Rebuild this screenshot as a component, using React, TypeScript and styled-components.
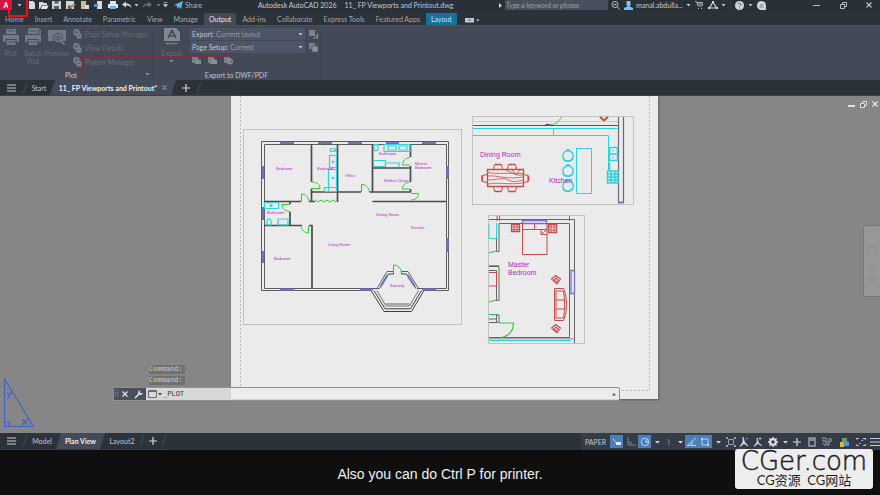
import React from "react";
import styled, { createGlobalStyle, css } from "styled-components";

const GlobalStyle = createGlobalStyle`
  *, *::before, *::after { box-sizing: border-box; }
  html, body { margin: 0; padding: 0; }
  body { background: #0f0f0f; color: #c3c8ce; font: 7px/10px Lato, "Open Sans", sans-serif; }
  button, input, select { font: inherit; color: inherit; margin: 0; padding: 0; border: 0; background: none; }
  svg { display: block; flex: none; }
  a { color: inherit; text-decoration: none; }
`;

const Page = styled.div`
  position: relative;
  display: flex;
  flex-direction: column;
  min-height: 100vh;
  overflow: hidden;
`;

/* ---------- title bar ---------- */

const TitleBar = styled.header`
  display: grid;
  grid-template-columns: 258px minmax(0, 1fr) auto;
  align-items: center;
  height: 10px;
  background: #2a3038;
  overflow: hidden;
`;

const QuickAccess = styled.div`
  display: flex;
  align-items: center;
`;

const AppButton = styled.button`
  width: 12px;
  height: 10px;
  background: #d8124f;
  color: #fff;
  font-weight: 700;
`;

const ToolButton = styled.button<{ $w?: number }>`
  display: flex;
  align-items: center;
  justify-content: center;
  flex: none;
  width: ${(p) => p.$w ?? 14}px;
  height: 10px;
`;

const ShareLink = styled.a`
  display: flex;
  align-items: center;
  gap: 2px;
  margin-left: 4px;
  color: #9db6c6;
`;

const WindowTitle = styled.div`
  display: flex;
  gap: 8px;
  color: #c6cbd1;
  white-space: nowrap;
`;

const TitleRight = styled.div`
  display: flex;
  align-items: center;
`;

const SearchInput = styled.input`
  width: 103px;
  height: 10px;
  padding: 0 1px;
  background: #474e5c;
  font-style: italic;
  &::placeholder { color: #9ba1aa; opacity: 1; }
`;

const UserButton = styled.button`
  display: flex;
  align-items: center;
  gap: 3px;
  width: 68px;
  margin-left: 2px;
  white-space: nowrap;
`;

const Divider = styled.span`
  width: 1px;
  height: 8px;
  margin: 0 1px 0 4px;
  background: #3d444e;
`;

const WindowButtons = styled.div`
  display: flex;
  margin-left: 40px;
  margin-right: 4px;
`;

/* ---------- ribbon ---------- */

const RibbonTabs = styled.nav`
  display: flex;
  align-items: flex-end;
  height: 15px;
  gap: 1px;
  background: #2b3239;
`;

const RibbonTab = styled.button<{ $tone?: "open" | "context" }>`
  height: 12px;
  padding: 0 5px;
  color: #a3a9b0;
  white-space: nowrap;
  ${(p) => p.$tone === "open" && css`background: #434956; color: #e4e7ea;`}
  ${(p) => p.$tone === "context" && css`background: #16709b; color: #cfe4ef;`}
`;

const Ribbon = styled.section`
  display: flex;
  height: 55px;
  background: #434956;
  border-top: 1px solid #4b515e;
`;

const Panel = styled.div<{ $w: number }>`
  display: flex;
  flex-direction: column;
  flex: none;
  width: ${(p) => p.$w}px;
  border-right: 1px solid #3e4450;
`;

const PanelBody = styled.div`
  display: flex;
  flex: 1;
  padding-top: 1px;
`;

const PanelTitle = styled.div`
  display: flex;
  height: 11px;
  justify-content: center;
  align-items: center;
  color: #c2c6cc;
`;

const PanelName = styled.span`
  flex: 1;
  text-align: center;
`;

const BigButton = styled.button<{ $w: number }>`
  display: flex;
  flex-direction: column;
  align-items: center;
  justify-content: flex-start;
  gap: 3px;
  width: ${(p) => p.$w}px;
  height: 42px;
  padding-top: 1px;
  line-height: 8px;
  color: #656b78;
`;

const SmallStack = styled.div`
  display: flex;
  flex-direction: column;
  padding-left: 4px;
`;

const SmallButton = styled.button`
  display: flex;
  align-items: center;
  gap: 3px;
  height: 14px;
  color: #676d79;
  white-space: nowrap;
`;

const FieldStack = styled.div`
  display: flex;
  flex-direction: column;
  padding-top: 1px;
  gap: 1px;
`;

const FieldRow = styled.div`
  display: flex;
  align-items: center;
  gap: 4px;
`;

const Field = styled.label`
  display: flex;
  align-items: center;
  width: 115px;
  height: 12px;
  padding: 0 2px;
  gap: 2px;
  background: #4c5465;
  color: #c3c7cd;
  white-space: nowrap;
`;

const FieldSelect = styled.select`
  appearance: none;
  flex: 1;
  min-width: 0;
  color: #979daa;
  outline: none;
`;

const IconRow = styled.div`
  display: flex;
  gap: 2px;
  padding-top: 1px;
`;

/* ---------- tab strips ---------- */

const TabStrip = styled.nav<{ $h: number }>`
  display: flex;
  align-items: center;
  height: ${(p) => p.$h}px;
  background: #2b3239;
  border-bottom: 1px solid #3a414a;
`;

const StripTab = styled.button<{ $w: number; $active?: boolean }>`
  position: relative;
  z-index: 0;
  display: flex;
  align-items: center;
  justify-content: center;
  gap: 5px;
  width: ${(p) => p.$w}px;
  height: 100%;
  color: #c2c7cd;
  white-space: nowrap;
  ${(p) => p.$active && css`
    color: #f0f2f4;
    font-weight: 700;
    &::before {
      content: "";
      position: absolute;
      z-index: -1;
      inset: 0;
      background: #434b59;
      clip-path: polygon(5px 0, 100% 0, calc(100% - 5px) 100%, 0 100%);
    }
  `}
`;

/* ---------- drawing area ---------- */

const Workspace = styled.main`
  position: relative;
  flex: 1;
  min-height: 337px;
  background: #868686;
  overflow: hidden;
`;

const Sheet = styled.div`
  position: absolute;
  left: 231px;
  top: 0;
  background: #ebebeb;
  box-shadow: 1px 1px 2px #5f5f5f;
`;

const UcsMark = styled.div`
  position: absolute;
  left: 3px;
  bottom: 5px;
`;

const ChildWindowButtons = styled.div`
  position: absolute;
  top: 3px;
  right: 0;
  display: flex;
`;

const NavPalette = styled.div`
  position: absolute;
  right: 0;
  top: 129px;
  width: 17px;
  height: 72px;
  display: flex;
  justify-content: center;
  align-items: center;
  background: #969896;
  border: 1px solid #787a78;
  border-right: 0;
  border-radius: 2px 0 0 2px;
`;

const CommandArea = styled.div`
  position: absolute;
  left: 113px;
  bottom: 32px;
  width: 507px;
  font-family: "DejaVu Sans Mono", "Liberation Mono", monospace;
`;

const HistoryLine = styled.div`
  width: 36px;
  height: 9px;
  margin: 0 0 2px 36px;
  line-height: 9px;
  background: #707070;
  color: #cdcdcd;
`;

const CommandBar = styled.div`
  display: flex;
  align-items: center;
  height: 14px;
  background: rgba(236, 236, 236, 0.8);
  border: 1px solid #8d8f92;
  border-radius: 1px 2px 2px 1px;
`;

const CommandHandle = styled.div`
  display: flex;
  align-items: center;
  width: 32px;
  height: 12px;
  background: #4a4f5d;
`;

const CommandInput = styled.input`
  flex: 1;
  min-width: 0;
  color: #3a3a3a;
  outline: none;
`;

/* ---------- status bar and caption ---------- */

const StatusBar = styled.footer`
  display: flex;
  justify-content: space-between;
  height: 17px;
  background: #2b3239;
`;

const StatusTools = styled.div`
  display: flex;
  align-items: center;
  background: #353c48;
  color: #c4c8ce;
`;

const StatusButton = styled.button<{ $w: number; $on?: boolean }>`
  display: flex;
  align-items: center;
  justify-content: center;
  width: ${(p) => p.$w}px;
  height: 13px;
  background: ${(p) => (p.$on ? "#4c7fb8" : "transparent")};
`;

const Caption = styled.div`
  display: flex;
  align-items: center;
  justify-content: center;
  height: 45px;
  padding-top: 3px;
  background: #0f0f0f;
  color: #f0f0f0;
  font: 14px/16px "Liberation Sans", Arial, sans-serif;
`;

const Watermark = styled.div`
  position: absolute;
  right: 7px;
  bottom: 6px;
  display: flex;
  flex-direction: column;
  align-items: center;
  width: 138px;
  height: 40px;
  border-radius: 3px;
  background: #ededed;
  color: #1d1d1d;
`;

const WatermarkName = styled.span`
  font: 200 26px/25px "DejaVu Sans Light", "DejaVu Sans", sans-serif;
  -webkit-text-stroke: 0.5px #1d1d1d;
`;

const WatermarkNote = styled.span`
  font: 13px/13px Lato, "Noto Sans CJK SC", sans-serif;
  white-space: pre;
`;

const Highlight = styled.div<{ $faint?: boolean }>`
  position: absolute;
  pointer-events: none;
  ${(p) =>
    p.$faint
      ? css`left: 82px; top: 56px; width: 152px; height: 39px; border: 1px solid #a8202c; opacity: 0.55;
          mask-image: linear-gradient(#000 30%, rgba(0, 0, 0, 0.3) 60%);`
      : css`left: 8px; top: -4px; width: 20px; height: 21px; border: 2px solid #f01018;`}
`;

/* ---------- icons ---------- */

const Caret = ({ c = "#c4c8ce" }: { c?: string }) => (
  <svg width="5" height="3" viewBox="0 0 5 3"><path d="M0.5 0h4L2.5 2.6z" fill={c} /></svg>
);

const Burger = () => (
  <svg width="9" height="8" viewBox="0 0 9 8"><path d="M0 1h9M0 4h9M0 7h9" stroke="#c8ccd1" strokeWidth="1" /></svg>
);

const Plus = () => (
  <svg width="8" height="8" viewBox="0 0 8 8"><path d="M4 0v8M0 4h8" stroke="#d4d7db" strokeWidth="1.2" /></svg>
);

const Cross = ({ c = "#a9aeb5", s = 5 }: { c?: string; s?: number }) => (
  <svg width={s} height={s} viewBox="0 0 6 6"><path d="M.5 .5l5 5M5.500 .5l-5 5" stroke={c} strokeWidth="1.2" /></svg>
);

const Slash = () => (
  <svg width="6" height="14" viewBox="0 0 6 14"><path d="M5 1L1 13" stroke="#454c56" strokeWidth="1" /></svg>
);

const Printer = ({ c = "#747985", s = 18, variant = "plain" }: { c?: string; s?: number; variant?: "plain" | "batch" }) => (
  <svg width={s} height={s} viewBox="0 0 18 18">
    {variant === "batch" && <path d="M5 0h10v2H5zM15 2h2v4h-2z" fill={c} />}
    <path d="M4 1h10v5H4z" fill={c} />
    <path d="M1 7h16v7h-2.500v-3h-11v3H1z" fill={c} />
    <path d="M4.500 12h9v5h-9z" fill={c} />
    <path d="M5.500 3h7M5.500 14h7" stroke="#434956" strokeWidth=".8" />
  </svg>
);

const PreviewIcon = () => (
  <svg width="18" height="18" viewBox="0 0 18 18">
    <path d="M0 2h18v11h-4a5 5 0 10-8 0H0z" fill="#737884" />
    <circle cx="10" cy="10" r="3.600" fill="#5b616e" stroke="#737884" strokeWidth="1.500" />
    <path d="M12.500 12.500l4 4" stroke="#737884" strokeWidth="2" />
  </svg>
);

const ExportIcon = () => (
  <svg width="16" height="18" viewBox="0 0 16 18">
    <path d="M0 0h12l4 4v9H0z" fill="#83878f" />
    <path d="M4 10L8 2.500 12 10M5.500 8h5" fill="none" stroke="#434956" strokeWidth="1.600" />
    <path d="M2 15.500h12" stroke="#7b808a" strokeWidth="1.500" strokeDasharray="3 .8" />
  </svg>
);

const GearPage = () => (
  <svg width="9" height="10" viewBox="0 0 9 10">
    <circle cx="3.500" cy="3.500" r="2.600" fill="#5f6572" stroke="#747a86" strokeWidth="1.600" />
    <path d="M3.500 4.500h5v5h-5z" fill="#7c818c" />
    <path d="M4.500 6.500h3" stroke="#434956" strokeWidth=".7" />
  </svg>
);

const TinySheet = ({ k }: { k: number }) => (
  <svg width="10" height="9" viewBox="0 0 10 9">
    <path d="M0 1h5l2 2v4H0z" fill="#7a7f8a" />
    {k === 0 && <path d="M3 4h6v4H3z" fill="#858a94" />}
    {k === 1 && <path d="M4 4h5v4H2z" fill="#8a8f98" />}
    {k === 2 && <circle cx="6" cy="5.500" r="2.400" fill="none" stroke="#8a8f98" strokeWidth="1.200" />}
  </svg>
);

const PickArea = ({ k }: { k: number }) => (
  <svg width="10" height="9" viewBox="0 0 10 9">
    <path d="M0 0h6v6H0z" fill="#7b808b" />
    {k ? <path d="M3 3h6v6H3z" fill="#8d929b" stroke="#434956" strokeWidth=".6" /> : <path d="M4 3l4.500 4.500M8.500 3.500V8H4" stroke="#8d929b" fill="none" />}
  </svg>
);

const quickIcons: { name: string; w: number; art: React.ReactNode }[] = [
  { name: "New", w: 12, art: <path d="M2 0h4l2 2v6H2z" fill="#d7dade" /> },
  { name: "Open", w: 12, art: <><path d="M0 1h4l1 1h3v2H3L1 8H0z" fill="#d7dade" /><path d="M3.500 4.500H9.500L8 8H1.800z" fill="#e7e9eb" /></> },
  { name: "Save", w: 14, art: <><path d="M0 0h9v8H0z" fill="#cfd3d8" /><path d="M2.500 0h4v2.500h-4zM2 5h5v3H2z" fill="#5a6270" /></> },
  { name: "Save As", w: 14, art: <><path d="M0 0h8v8H0z" fill="#cfd3d8" /><path d="M2 4.500h4V8H2z" fill="#5a6270" /><path d="M4 6l4-4 1.500 1.500-4 4z" fill="#d58b4a" /></> },
  { name: "Open from Web", w: 14, art: <><path d="M1 0h5v8H1z" fill="#d4b98a" /><path d="M5 4h4v4H5z" fill="#d7dade" /></> },
  { name: "Save to Web", w: 14, art: <><path d="M3 0h5v8H3z" fill="#d7dade" /><path d="M0 3h4v3H0z" fill="#3d97d6" /></> },
  { name: "Plot", w: 14, art: <><path d="M2 0h6v3H2zM0 3h10v4H0z" fill="#dce4ec" /><path d="M2 5h6v3H2z" fill="#6db3e6" /></> },
  { name: "Undo", w: 14, art: <path d="M0 3.500L4 .5v2c3 0 5 1 5.500 4.500C8 5.200 6.500 4.600 4 4.600v2z" fill="#d3d6da" /> },
];

const ribbonTabs = ["Home", "Insert", "Annotate", "Parametric", "View", "Manage", "Output", "Add-ins", "Collaborate", "Express Tools", "Featured Apps", "Layout"];

const statusItems: { name: string; w: number; on?: boolean; art: React.ReactNode }[] = [
  { name: "Command line", w: 13, on: true, art: <><path d="M1 2l2 2M3 5.500h1" stroke="#dfeaf5" /><path d="M4 5h5v3H4z" fill="#dfeaf5" /></> },
  { name: "Ortho mode", w: 15, art: <path d="M2 0v8h8M2 5h3v3" fill="none" stroke="#79808c" /> },
  { name: "Polar tracking", w: 13, on: true, art: <><circle cx="5" cy="5" r="3.700" fill="none" stroke="#b9d3ee" /><path d="M5 5h4M5 5l3-3" stroke="#b9d3ee" /></> },
  { name: "Polar options", w: 11, art: <path d="M3 4h5L5.500 6.600z" fill="#d4d7db" /> },
  { name: "Isometric drafting", w: 12, art: <path d="M4 2l2 2v4" fill="none" stroke="#79808c" /> },
  { name: "Isometric options", w: 11, art: <path d="M3 4h5L5.500 6.600z" fill="#d4d7db" /> },
  { name: "Object snap tracking", w: 13, on: true, art: <path d="M0 8.500h9M1 8L9 1M5 4.500v4" fill="none" stroke="#b9d3ee" /> },
  { name: "Object snap", w: 14, on: true, art: <><path d="M2 2h6v6H2z" fill="none" stroke="#b9d3ee" /><path d="M1 1h2v2H1zM7 7h2v2H7z" fill="#b9d3ee" /></> },
  { name: "Object snap options", w: 12, art: <path d="M3 4h5L5.500 6.600z" fill="#d4d7db" /> },
  { name: "Annotation visibility", w: 13, art: <><path d="M2.500 2.500h5v5h-5z" fill="none" stroke="#9aa0a9" /><path d="M0 0h2v2H0zM8 0h2v2H8zM0 8h2v2H0zM8 8h2v2H8z" fill="#9aa0a9" /></> },
  { name: "Annotation scale", w: 14, art: <path d="M4 0l1.500 5L9 9 5 6.500 1 9.500 4 5zM7 2l2-1" fill="#dfe1e4" stroke="#dfe1e4" strokeWidth=".7" /> },
  { name: "Automatic scale", w: 14, art: <path d="M4 1l1.500 4.500L9 9 5 6.500 1 9.500 4 5zM7 0v3M5.500 1.500h3" fill="#c9ccd1" stroke="#c9ccd1" strokeWidth=".7" /> },
  { name: "Workspace", w: 15, art: <><circle cx="5" cy="5" r="2.800" fill="none" stroke="#e0e2e5" strokeWidth="2" /><path d="M5 0v2M5 8v2M0 5h2M8 5h2M1.500 1.500l1.400 1.400M7 7l1.500 1.500M8.500 1.500L7 3M3 7L1.500 8.500" stroke="#e0e2e5" strokeWidth="1.500" /></> },
  { name: "Workspace options", w: 9, art: <path d="M3 4h5L5.500 6.600z" fill="#d4d7db" /> },
  { name: "Annotation monitor", w: 15, art: <path d="M5 1v8M1 5h8" stroke="#d4d7db" strokeWidth="1.200" /> },
  { name: "Quick properties", w: 15, art: <path d="M2 1h6v8H2zM2 3h6" fill="none" stroke="#9aa0a9" strokeWidth="1.400" /> },
  { name: "Isolate objects", w: 16, art: <><path d="M0 1h4v3H0zM4 5h3v3H4z" fill="none" stroke="#9aa0a9" /><circle cx="8" cy="3" r="1.500" fill="none" stroke="#9aa0a9" /><path d="M1 6l2 3" stroke="#9aa0a9" /></> },
  { name: "Graphics performance", w: 17, art: <><path d="M1 5h4v5H1z" fill="#e2b53c" /><path d="M3 1h5v4H3z" fill="#6f9c57" /><path d="M4.500 4.500H10V9H4.500z" fill="#4a98dd" /></> },
  { name: "Clean screen", w: 18, art: <path d="M0 3V1.500h3M7 1.500h2.500V3M0 7v1.500h3M7 8.500h2.500V7M3 6.500h1.500M5.500 4l1.500-1" fill="none" stroke="#b9bdc3" strokeWidth="1.200" /> },
  { name: "Customization", w: 10, art: <path d="M0 1.500h10M0 5h10M0 8.500h10" stroke="#c8ccd1" strokeWidth="1.200" /> },
];

/* ---------- floor plan ---------- */

const WALL = "#4b4b4b";
const CYAN = "#2fd3da";
const GREEN = "#35c83f";
const RED = "#c94a4a";
const BLUE = "#7472c0";
const MAGENTA = "#b81fc4";

const roomNames: [string, number, number][] = [
  ["Bedroom", 276, 170], ["Bedroom", 317, 170], ["Office", 345, 177], ["Bathroom", 379, 155],
  ["Walkin Closet", 384, 182], ["Master", 415, 165], ["Bedroom", 415, 169], ["Bathroom", 267, 214],
  ["Dining Room", 376, 216], ["Kitchen", 411, 229], ["Living Room", 328, 246], ["Bedroom", 274, 260], ["Balcony", 390, 287],
];

const Frame = ({ x, y, w, h }: { x: number; y: number; w: number; h: number }) => (
  <rect x={x + 0.5} y={y + 0.5} width={w} height={h} fill="none" stroke="#c2c2c2" />
);

const HousePlan = () => (
  <g fill="none" fontFamily="Liberation Sans, Arial, sans-serif">
    <Frame x={243} y={129} w={218} h={195} />
    <g stroke="#5d5d5d" strokeWidth="1">
      <path d="M371 290.500H261.500V141.500H448.500V290.500H424" />
      <path d="M379 288.500H264.500V144.500H446.500V288.500H417" />
    </g>
    <g stroke={WALL} strokeWidth="1.700">
      <path d="M311.500 144V182M311.500 188.500V202M337.500 144V202M311.500 192H361M369.500 192H411" />
      <path d="M372.500 144V192M372.500 168H411M410.500 144V157M410.500 166V182M410.500 189v3" />
      <path d="M372.500 201.500H446M264 201.500H301M309 201.500h6M290 202v2M290 212v13M264 225.500H302M309 225.500h3.500M312 225V288" />
    </g>
    <g stroke={BLUE} strokeWidth="2.200">
      <path d="M280 143h14M318 143h14M348 143h14M386 143h13M422 143h14M280 289.500h14M360 289.500h13M422 289.500h14" />
      <path d="M263 166v13M263 207v13M263 251v12M447.500 166v13M447.500 238v14" />
    </g>
    <g stroke="#3f3f3f" strokeWidth="1">
      <path d="M371 290.500L384 311.500H411.500L424 290.500" />
      <path d="M374 290.500L385 308.800H410.500L421.500 290.500" />
      <path d="M377 290.500L386 306H409.500L418.500 290.500" strokeWidth=".7" />
      <path d="M393.500 271.500H387L377 288.500M386 304H409.500M418.500 288.500L408 271.500H401.500" strokeWidth=".8" />
      <path d="M393.500 274H388.500L379.500 288.500M401.500 274H406.500L416 288.500M393.500 271v3M401.500 271v3" />
    </g>
    <path d="M387.500 275L381 286M407.500 275L414.500 286" stroke={BLUE} strokeWidth="2.200" />
    <g stroke={GREEN} strokeWidth="1">
      <path d="M312 188.500h8c0-4-3-6.500-8-6.500" />
      <path d="M301.500 201.500v-7.500c4 0 7 3 7.500 7.500" />
      <path d="M361.500 192v-7.500c4 0 7.500 3 8 7.500" />
      <path d="M410 165h-7.500c0-4 3-7 7.500-7.500M410 189h-7.500c0-4 3-6.500 7.500-7" />
      <path d="M411 193.500h7.500c0 4-3 6.500-7.500 6.500" />
      <path d="M290 204.500h-8c0 4 3 6.500 8 7" />
      <path d="M308.500 226v7c-4 0-7-3-7.500-7" />
      <path d="M393.500 273v-8c4 0 8 3 8 8" />
      <path d="M315 200l3 2 3-2 3 2 3-2 3 2 3-2 3 2" />
    </g>
    <g stroke={CYAN} strokeWidth="1.200">
      <path d="M329.500 155.500h7v12h-7zM328.500 169.500h8v22h-8zM324.500 187.500h12v4h-12z" />
      <ellipse cx="332.500" cy="150" rx="2.500" ry="1.500" />
      <path d="M336 148v4" />
      <circle cx="333" cy="162" r=".7" /><circle cx="333" cy="178" r=".7" />
      <path d="M384 144.500h26v7h-26zM388 146h8v4h-8zM399 146h8v4h-8z" />
      <path d="M376 144v2M378 144.500v4c0 3-4 3-4 0v-4zM373.500 160.500h12v6h-12zM386 163h13v4" />
      <path d="M264.500 202.500h14v6h-14z" /><circle cx="271" cy="205.500" r="1" />
      <path d="M278 219h10v6h-10zM267 225v-4c0-3 4-3 4 0v4z" />
    </g>
    <g fill={MAGENTA} fontSize="4">
      {roomNames.map(([t, x, y], i) => <text key={i} x={x} y={y}>{t}</text>)}
    </g>
  </g>
);

const KitchenView = () => (
  <g fill="none" fontFamily="Liberation Sans, Arial, sans-serif">
    <Frame x={472} y={116} w={161} h={88} />
    <path d="M473 121.500h145" stroke="#cfcfcf" />
    <path d="M473 125.500h145" stroke="#5a5a5a" strokeWidth="1.200" />
    <path d="M618.500 117v86M623.500 117v86" stroke="#6a6a74" strokeWidth="1.200" />
    <path d="M618 202.500h6" stroke={BLUE} strokeWidth="2" />
    <path d="M545 125.500l3-1 4 1" stroke="#4a4a4a" strokeWidth="1.500" />
    <path d="M549 125c5 0 10-3 12.500-8" stroke={GREEN} />
    <path d="M600 117l4 3.500 4-3.500" stroke={RED} strokeWidth="2" />
    <g stroke={CYAN} strokeWidth="1">
      <path d="M473 128.500h145M473 135.500h135.500V170M553.500 128v7" />
      <path d="M609.500 147.500h8v13h-8zM609.500 154h8M609.500 162v9" strokeWidth="1.500" />
      <path d="M613 150v1M613 157v1" strokeWidth="1.500" />
      <path d="M607.500 171h10.500v12h-10.500zM607 174h11M607 177h11M607 180h11M611 171v12M615 171v12" strokeWidth="1.500" />
      <path d="M576.500 148.500h15v45h-15z" />
      {[156, 171, 186].map((y) => (
        <g key={y}><circle cx="568" cy={y} r="5.200" strokeWidth="1.400" /><path d={`M563 ${y + 3}a6 6 0 0010-1M566 ${y - 6}h4`} strokeWidth="1.600" /></g>
      ))}
    </g>
    <g stroke={RED} strokeWidth="1">
      <path d="M487.500 169.500h36v17h-36z" strokeWidth="1.300" />
      <path d="M488 172.500c9 2 20 0 35 1M488 176c10-1 18 4 35 1M488 180c8 0 14-3 20 0s10 1 15 0M488 184c10-2 20 1 35-1M506 170c6 3 10 6 17 5M512 170l4 5 4-5" strokeWidth=".8" />
      <path d="M493.500 169l1-4.500h7l1 4.500M507.500 169l1-4.500h7l1 4.500M493.500 187l1 4.500h7l1-4.500M507.500 187l1 4.500h7l1-4.500" />
      <path d="M487 174.500l-4.500 1v6l4.500 1M524 174.500l4 1v6l-4 1" />
      <path d="M495 164.500h6M509 164.500h6M495 191.500h6M509 191.500h6M482 175.500v6M528.500 175.500v6" strokeWidth="1.500" />
    </g>
    <g fill={MAGENTA} fontSize="7"><text x="480" y="157">Dining Room</text><text x="549" y="183">Kitchen</text></g>
  </g>
);

const MasterView = () => (
  <g fill="none" fontFamily="Liberation Sans, Arial, sans-serif">
    <Frame x={488} y={215} w={96} h={128} />
    <g stroke="#666" strokeWidth="1">
      <path d="M489 219.500H574.500V343M499 223.500H569.500V337.500H499M489 337.500h10" />
      <path d="M496.500 223.500V251.500h2.500V223.500M489 266.500h10M489 270.500h7.500V300.500h2.500V266.500M489 319h7.500M489 322.500h10V315h-2.500v7" />
      <path d="M489 338.800h85" strokeWidth=".7" />
    </g>
    <path d="M489 340.500h82" stroke={CYAN} strokeWidth="1.200" />
    <path d="M489 224v14.500h7.500V224" stroke={CYAN} />
    <path d="M522.500 220.500h24v3h-24zM571 270.500h3.500v23H571z" stroke={BLUE} strokeWidth="1.300" />
    <g stroke={GREEN} strokeWidth="1.200">
      <path d="M489 253l7-2M489 265.500h10M489 302l7-2M489 314.500h10" />
      <path d="M499 323h14.500c0 8-5 13.500-13 14.500" />
    </g>
    <g stroke={RED} strokeWidth="1">
      <path d="M497 216v5M499.500 216v5M569.500 216v5M489 272.500h7.500V286H489" />
      <path d="M522.500 224v30.500h24.500V224M523 229.500h24M534.500 224v5.500M541 229.500v5h6M541 234.500l6-5" />
      <path d="M511.500 224.500h8v7h-8zM548.500 224.500h8v8h-8z" strokeWidth="1.300" />
      <path d="M512 227h7M512 229.500h7M514 225v6M517 225v6M549 227h8M549 230h8M551 225v7M554 225v7" strokeWidth=".9" />
      <path d="M554.500 288.500h9c4 9 4 23 0 32h-9zM556 291h7M556 318h7M556 291v27M563.500 291c1.500 8 1.500 19 0 27M556 300h8M556 309h8" />
      {[280, 329].map((y) => (
        <path key={y} d={`M551.500 ${y - 1}l4-3.500 5 3.500-3.500 5zM554 ${y}l2-2 2 2-2 2.500z`} strokeWidth="1.100" />
      ))}
    </g>
    <g fill={MAGENTA} fontSize="7"><text x="508" y="267">Master</text><text x="508" y="275">Bedroom</text></g>
  </g>
);

export default function App() {
  return (
    <Page>
      <GlobalStyle />
      <TitleBar>
        <QuickAccess>
          <AppButton aria-label="Application menu">A</AppButton>
          <ToolButton $w={14} aria-label="Application options"><Caret /></ToolButton>
          {quickIcons.map((q) => (
            <ToolButton key={q.name} $w={q.w} aria-label={q.name}>
              <svg width="10" height="8" viewBox="0 0 10 8">{q.art}</svg>
            </ToolButton>
          ))}
          <ToolButton $w={5} aria-label="Undo options"><Caret /></ToolButton>
          <ToolButton $w={16} aria-label="Redo">
            <svg width="10" height="8" viewBox="0 0 10 8"><path d="M10 3.500L6 .5v2C3 2.500 1 3.500.5 7 2 5.200 3.500 4.600 6 4.600v2z" fill="#636a75" /></svg>
          </ToolButton>
          <ToolButton $w={6} aria-label="Redo options"><Caret c="#7b818b" /></ToolButton>
          <ToolButton $w={9} aria-label="Customize toolbar">
            <svg width="5" height="6" viewBox="0 0 5 6"><path d="M.5 .5h4M.5 2.500h4L2.500 5z" stroke="#c4c8ce" strokeWidth=".7" fill="#c4c8ce" /></svg>
          </ToolButton>
          <ShareLink href="#share">
            <svg width="9" height="8" viewBox="0 0 9 8"><path d="M9 0L7 8 4.500 6 3 8V5L0 4z" fill="#5fb4ea" /></svg>
            Share
          </ShareLink>
        </QuickAccess>
        <WindowTitle><span>Autodesk AutoCAD 2026</span><span>11_ FP Viewports and Printout.dwg</span></WindowTitle>
        <TitleRight>
          <ToolButton $w={9} aria-label="Collapse search">
            <svg width="3" height="5" viewBox="0 0 3 5"><path d="M0 0l3 2.500L0 5z" fill="#d4d7db" /></svg>
          </ToolButton>
          <SearchInput aria-label="Search" placeholder="Type a keyword or phrase" />
          <ToolButton $w={14} aria-label="Search">
            <svg width="9" height="9" viewBox="0 0 9 9"><circle cx="4" cy="3.500" r="3" fill="none" stroke="#b9bdc3" /><path d="M6 5.500l2.500 3M2.500 3.500h3" stroke="#b9bdc3" /></svg>
          </ToolButton>
          <UserButton>
            <svg width="9" height="9" viewBox="0 0 9 9"><path d="M2.500 0h4v4l-1 1.500L9 7v2H0V7l3.500-1.500-1-1.500z" fill="#7fc0ee" /></svg>
            <span>manal.abdulla...</span>
            <Caret />
          </UserButton>
          <ToolButton aria-label="Store">
            <svg width="8" height="8" viewBox="0 0 8 8"><path d="M0 .5h1.500L3 5h4l1-3.500H2M3 7.500h1M6 7.500h1M2.500 3H7" fill="none" stroke="#a9aeb5" /></svg>
          </ToolButton>
          <ToolButton aria-label="Autodesk apps">
            <svg width="10" height="8" viewBox="0 0 10 8"><path d="M5 1L1.500 7h7z" fill="none" stroke="#d4d7db" strokeWidth="1.200" /><path d="M4 0h2v2H4zM0 6h2v2H0zM8 6h2v2H8z" fill="#d4d7db" /></svg>
          </ToolButton>
          <ToolButton $w={6} aria-label="App options"><Caret /></ToolButton>
          <Divider />
          <ToolButton aria-label="Help">
            <svg width="9" height="9" viewBox="0 0 9 9"><circle cx="4.500" cy="4.500" r="4.500" fill="#d4d7db" /><path d="M3 3.500c0-2 3-2 3 0 0 1-1.500 1-1.500 2M4.500 6.500v1" stroke="#5a6270" fill="none" /></svg>
          </ToolButton>
          <ToolButton $w={8} aria-label="Help options"><Caret /></ToolButton>
          <ToolButton aria-label="Assistant">
            <svg width="9" height="9" viewBox="0 0 9 9"><path d="M4.500 0A4.500 4.500 0 104.500 9H9V4.500A4.500 4.500 0 004.500 0z" fill="#d4d7db" /><path d="M2.500 4h4M2.500 6h4" stroke="#7b818b" /></svg>
          </ToolButton>
          <WindowButtons>
            <ToolButton $w={16} aria-label="Minimize"><svg width="7" height="7" viewBox="0 0 7 7"><path d="M0 3.500h7" stroke="#b9bdc3" /></svg></ToolButton>
            <ToolButton $w={38} aria-label="Restore"><svg width="7" height="7" viewBox="0 0 7 7"><path d="M.5 2.500h4v4h-4zM2.500 2V.5h4v4H5" fill="none" stroke="#b9bdc3" /></svg></ToolButton>
            <ToolButton aria-label="Close"><Cross s={6} c="#b9bdc3" /></ToolButton>
          </WindowButtons>
        </TitleRight>
      </TitleBar>

      <RibbonTabs>
        {ribbonTabs.map((t) => (
          <RibbonTab key={t} $tone={t === "Output" ? "open" : t === "Layout" ? "context" : undefined}>{t}</RibbonTab>
        ))}
        <ToolButton $w={30} aria-label="Ribbon display">
          <svg width="15" height="5" viewBox="0 0 15 5"><path d="M0 0h9v4.500H0z" fill="#c4c8ce" /><path d="M3 2h3" stroke="#5a6270" /><path d="M11 1.500h3.500L12.800 3.500z" fill="#c4c8ce" /></svg>
        </ToolButton>
      </RibbonTabs>

      <Ribbon>
        <Panel $w={153}>
          <PanelBody>
            <BigButton $w={21}><Printer /><span>Plot</span></BigButton>
            <BigButton $w={24}><Printer variant="batch" /><span>Batch<br />Plot</span></BigButton>
            <BigButton $w={24}><PreviewIcon /><span>Preview</span></BigButton>
            <SmallStack>
              {["Page Setup Manager", "View Details", "Plotter Manager"].map((t) => (
                <SmallButton key={t}><GearPage />{t}</SmallButton>
              ))}
            </SmallStack>
          </PanelBody>
          <PanelTitle><PanelName>Plot</PanelName><ToolButton $w={10} aria-label="Plot options"><Caret c="#8f949d" /></ToolButton></PanelTitle>
        </Panel>
        <Panel $w={168}>
          <PanelBody>
            <BigButton $w={37}><ExportIcon /><span>Export</span><Caret c="#8f949d" /></BigButton>
            <FieldStack>
              <FieldRow>
                <Field>Export:<FieldSelect><option>Current layout</option></FieldSelect><Caret /></Field>
                <PickArea k={0} />
              </FieldRow>
              <FieldRow>
                <Field>Page Setup:<FieldSelect><option>Current</option></FieldSelect><Caret /></Field>
                <PickArea k={1} />
              </FieldRow>
              <IconRow>
                {[0, 1, 2].map((k) => <ToolButton key={k} aria-label="Export option"><TinySheet k={k} /></ToolButton>)}
              </IconRow>
            </FieldStack>
          </PanelBody>
          <PanelTitle>Export to DWF/PDF</PanelTitle>
        </Panel>
      </Ribbon>

      <TabStrip $h={16}>
        <ToolButton $w={22} aria-label="File tab menu"><Burger /></ToolButton>
        <Slash />
        <StripTab $w={22}>Start</StripTab>
        <StripTab $w={126} $active>11_ FP Viewports and Printout*<Cross /></StripTab>
        <ToolButton $w={20} aria-label="New file"><Plus /></ToolButton>
        <Slash />
      </TabStrip>

      <Workspace>
        <Sheet>
          <svg width="427" height="303" viewBox="231 96 427 303">
            <path d="M240.500 96V390.500H649.500V96" fill="none" stroke="#b9b9b9" strokeDasharray="2 2" />
            <HousePlan />
            <KitchenView />
            <MasterView />
          </svg>
        </Sheet>
        <UcsMark>
          <svg width="32" height="50" viewBox="0 0 32 50">
            <path d="M1.500 1V48.500H30.500zM1.500 44h4.500v4.500M4 14l2.500 4M9 13l-4.500 8M19 41l6 6M25 41l-6 6" fill="none" stroke="#3f62c9" strokeWidth="1.100" />
          </svg>
        </UcsMark>
        <ChildWindowButtons>
          <ToolButton $w={11} aria-label="Minimize drawing"><svg width="7" height="7" viewBox="0 0 7 7"><path d="M0 5h7" stroke="#e3e3e3" strokeWidth="2" /></svg></ToolButton>
          <ToolButton $w={12} aria-label="Restore drawing"><svg width="7" height="7" viewBox="0 0 7 7"><path d="M.5 2.500h4v4h-4zM2.500 2V.5h4v4H5" fill="#777" stroke="#e3e3e3" /></svg></ToolButton>
          <ToolButton $w={11} aria-label="Close drawing"><Cross s={6} c="#e8e8e8" /></ToolButton>
        </ChildWindowButtons>
        <NavPalette>
          <svg width="12" height="60" viewBox="0 0 12 60" fill="none" stroke="#8a908c">
            <circle cx="6" cy="18" r="4" /><path d="M2 33l8 6M10 33l-8 6M6 44l4 4-4 4-4-4z" />
          </svg>
        </NavPalette>
        <CommandArea>
          <HistoryLine>Command:</HistoryLine>
          <HistoryLine>Command:</HistoryLine>
          <CommandBar>
            <CommandHandle>
              <svg width="5" height="12" viewBox="0 0 5 12"><path d="M1.500 2v8M3.500 2v8" stroke="#868b95" strokeDasharray="1 1" /></svg>
              <ToolButton $w={11} aria-label="Close command line"><Cross c="#e0e2e5" s={6} /></ToolButton>
              <ToolButton $w={16} aria-label="Customize command line">
                <svg width="9" height="9" viewBox="0 0 9 9"><path d="M1 8l4-4" stroke="#e0e2e5" strokeWidth="1.600" /><path d="M8.500 2.500A2.300 2.300 0 116.500 .5L5.500 2l1.500 1.500z" fill="#e0e2e5" /></svg>
              </ToolButton>
            </CommandHandle>
            <ToolButton $w={17} aria-label="Recent commands">
              <svg width="14" height="8" viewBox="0 0 14 8"><path d="M.5 .5h8v7h-8z" fill="#d9d9d9" stroke="#6a6a6a" /><path d="M0 1.500h9" stroke="#6a6a6a" /><path d="M10 3h4l-2 2.500z" fill="#4a4a4a" /></svg>
            </ToolButton>
            <CommandInput aria-label="Command" defaultValue="_PLOT" />
            <ToolButton $w={11} aria-label="Expand history"><svg width="4" height="3" viewBox="0 0 4 3"><path d="M0 2.500h4L2 0z" fill="#555" /></svg></ToolButton>
          </CommandBar>
        </CommandArea>
      </Workspace>

      <StatusBar>
        <TabStrip $h={17}>
          <ToolButton $w={22} aria-label="Layout menu"><Burger /></ToolButton>
          <Slash />
          <StripTab $w={28}>Model</StripTab>
          <StripTab $w={49} $active>Plan View</StripTab>
          <StripTab $w={34}>Layout2</StripTab>
          <Slash />
          <ToolButton $w={16} aria-label="New layout"><Plus /></ToolButton>
          <Slash />
        </TabStrip>
        <StatusTools>
          <StatusButton $w={29}>PAPER</StatusButton>
          {statusItems.map((s) => (
            <StatusButton key={s.name} $w={s.w} $on={s.on} aria-label={s.name}>
              <svg width="10" height="10" viewBox="0 0 10 10">{s.art}</svg>
            </StatusButton>
          ))}
        </StatusTools>
      </StatusBar>

      <Caption>Also you can do Ctrl P for printer.</Caption>

      <Watermark>
        <WatermarkName>CGer.com</WatermarkName>
        <WatermarkNote>CG资源  CG网站</WatermarkNote>
      </Watermark>
      <Highlight />
      <Highlight $faint />
    </Page>
  );
}
